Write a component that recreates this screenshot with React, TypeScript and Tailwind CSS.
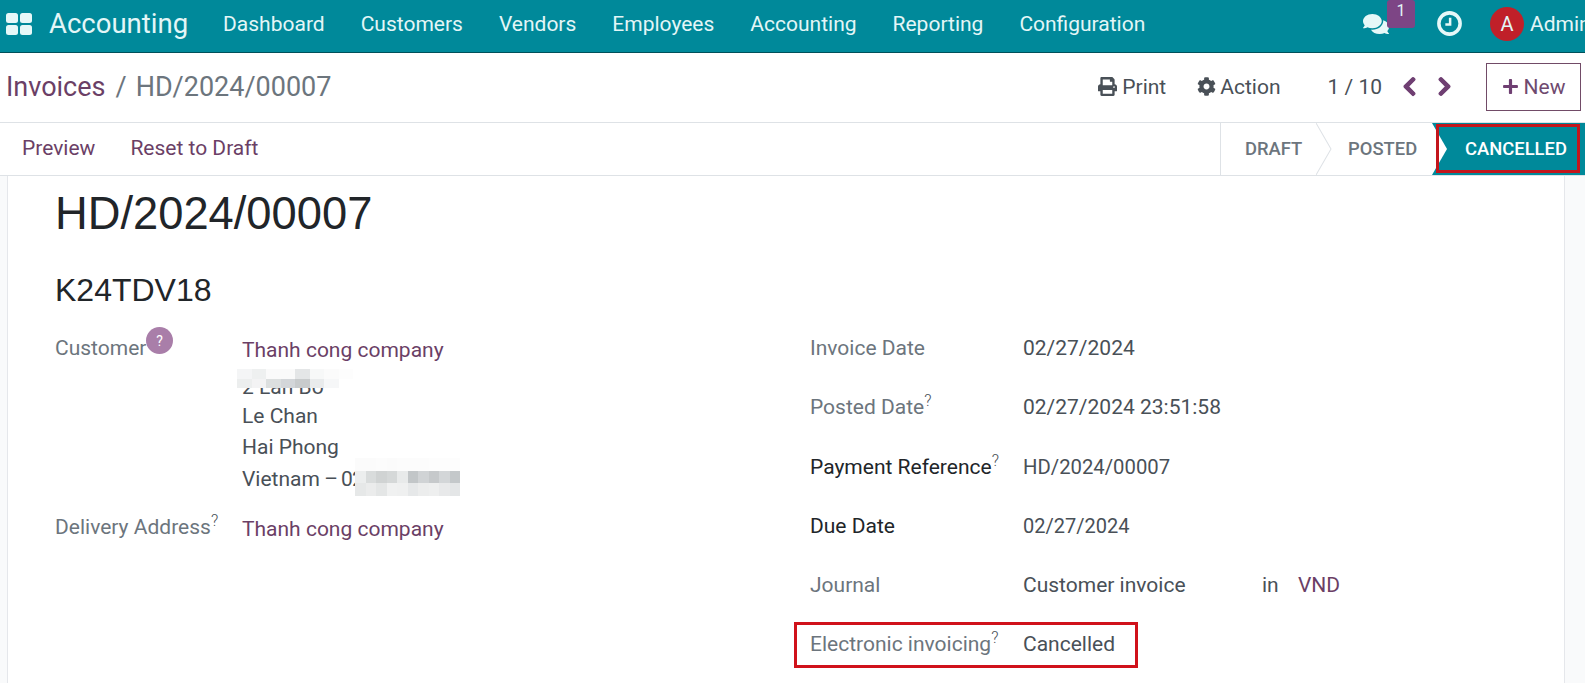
import React from "react";
import { FaComments, FaPrint, FaCog, FaChevronLeft, FaChevronRight, FaPlus } from "react-icons/fa";

const Sup = () => <sup className="-top-[8px] text-[16px] font-light text-[#495057]">?</sup>;

const mosaic1 = [
  ["#f4f5f6", "#eef0f0", "#fafafa", "#fafafa", "#e4e6e7", "#f7f8f8", "#fbfbfb", "#fdfdfd"],
  ["#eceeee", "#f3f3f4", "#dcdfdf", "#d3d6d9", "#c8cbcc", "#e9ebec", "#f6f7f8", "#ffffff"],
];
const mosaic2 = [
  ["#fbfbfb", "#fbfbfb", "#fcfcfc", "#fbfbfb", "#fcfcfc", "#fcfcfc", "#fcfcfc", "#fdfdfd", "#fdfdfd", "#fdfdfd"],
  ["#eceeee", "#d9dcdc", "#d0d3d3", "#d5d8d8", "#e8eaea", "#c2c6c8", "#d0d3d5", "#c6c9cb", "#d3d6d8", "#c4c8ca"],
  ["#e6e8e8", "#ebecec", "#e4e6e6", "#f0f1f1", "#eff0f0", "#e6e8e9", "#eceded", "#eeefef", "#e8e9ea", "#e4e6e7"],
];

const Mosaic = ({ rows, className }: { rows: string[][]; className: string }) => (
  <div className={`absolute flex flex-col ${className}`}>
    {rows.map((r, i) => (
      <div key={i} className="flex flex-1">
        {r.map((c, j) => (
          <div key={j} className="flex-1" style={{ backgroundColor: c }} />
        ))}
      </div>
    ))}
  </div>
);

const Row = ({
  label,
  dark,
  sup,
  className = "",
  children,
}: {
  label: string;
  dark?: boolean;
  sup?: boolean;
  className?: string;
  children: React.ReactNode;
}) => (
  <div className={`flex h-[59px] items-center ${className}`}>
    <div className={`w-[213px] ${dark ? "text-[#212529]" : "text-[#6c757d]"}`}>
      {label}
      {sup && <Sup />}
    </div>
    <div className="flex items-center text-[#495057]">{children}</div>
  </div>
);

export default function App() {
  return (
    <div className="h-[683px] w-[1585px] overflow-hidden bg-[#f9fafb] font-['Roboto',sans-serif] text-[21px] leading-[30px]">
      <header className="flex h-[53px] items-center border-b border-[#01505a] bg-[#00899a] pb-[5px] text-[#e3f6f7]">
        <svg viewBox="0 0 26 22" className="ml-[6px] h-[22px] w-[26px]" fill="#e6f8f8">
          <rect x="0" y="0" width="12" height="10" rx="2.5" />
          <rect x="14" y="0" width="12" height="10" rx="2.5" />
          <rect x="0" y="12" width="12" height="10" rx="2.5" />
          <rect x="14" y="12" width="12" height="10" rx="2.5" />
        </svg>
        <span className="ml-[17px] text-[27.5px]">Accounting</span>
        <nav className="ml-[35px] flex gap-[36px]">
          {["Dashboard", "Customers", "Vendors", "Employees", "Accounting", "Reporting", "Configuration"].map((t) => (
            <span key={t}>{t}</span>
          ))}
        </nav>
        <div className="ml-auto flex items-center">
          <div className="relative">
            <FaComments className="h-[26px] w-[26px] text-[#e6f8f8]" />
            <span className="absolute -top-[11px] left-[24px] flex h-[28px] w-[28px] items-center justify-center rounded-[3px] bg-[#7d4585] pb-[6px] text-[16px]">1</span>
          </div>
          <svg viewBox="0 0 24 24" className="ml-[48px] h-[25px] w-[25px]" fill="none" stroke="#e6f8f8">
            <circle cx="12" cy="12" r="10.2" strokeWidth="3.4" />
            <path d="M12.6 6.5 V13 H8" strokeWidth="2.4" />
          </svg>
          <span className="ml-[28px] flex h-[34px] w-[34px] items-center justify-center rounded-full bg-[#c02029] text-[20px]">A</span>
          <span className="ml-[6px] w-[55px] overflow-hidden whitespace-nowrap">Admin</span>
        </div>
      </header>

      <div className="flex h-[70px] items-center border-b border-[#dee2e6] bg-white pb-[2px] pl-[6px] pr-[4px]">
        <span className="text-[27px] text-[#6b3f66]">Invoices</span>
        <span className="ml-[10px] text-[27px] text-[#6c757d]">/</span>
        <span className="ml-[9px] text-[27px] text-[#6c757d]">HD/2024/00007</span>
        <div className="ml-auto flex items-center text-[#495057]">
          <FaPrint className="h-[19px] w-[19px]" />
          <span className="ml-[5px]">Print</span>
          <FaCog className="ml-[31px] h-[19px] w-[19px]" />
          <span className="ml-[4px]">Action</span>
          <span className="ml-[47px]">1 / 10</span>
          <FaChevronLeft className="ml-[19px] h-[21px] w-[17px] text-[#6f3f72]" stroke="currentColor" strokeWidth={30} />
          <FaChevronRight className="ml-[18px] h-[21px] w-[17px] text-[#6f3f72]" stroke="currentColor" strokeWidth={30} />
          <span className="ml-[33px] flex h-[48px] w-[95px] items-center justify-center gap-[5px] border border-[#714b67] text-[#6f4a6f]">
            <FaPlus className="h-[17px] w-[17px] text-[#6f3f72]" />
            New
          </span>
        </div>
      </div>

      <div className="relative flex h-[53px] items-stretch border-b border-[#dee2e6] bg-white">
        <div className="ml-[22px] flex items-center gap-[35px] pb-[2px] text-[#6b3f66]">
          <span>Preview</span>
          <span>Reset to Draft</span>
        </div>
        <div className="ml-auto flex items-stretch text-[18.4px] font-medium text-[#6c757d]">
          <div className="flex w-[96px] items-center border-l border-[#dee2e6] pl-[24px]">DRAFT</div>
          <svg viewBox="0 0 16 50" className="h-full w-[16px]" preserveAspectRatio="none" fill="none" stroke="#dee2e6">
            <path d="M0 0 L15 25 L0 50" />
          </svg>
          <div className="flex w-[100px] items-center pl-[16px]">POSTED</div>
          <div className="relative flex w-[153px] items-center bg-[#00899a] pl-[33px] text-white">
            <svg viewBox="0 0 16 50" className="absolute left-0 top-0 h-full w-[16px]" preserveAspectRatio="none">
              <path d="M0 0 L15 25 L0 50 Z" fill="#ffffff" />
            </svg>
            CANCELLED
          </div>
        </div>
        <div className="absolute left-[1436px] top-[1px] h-[49px] w-[144px] border-[3px] border-[#c3161c]" />
      </div>

      <main className="relative ml-[7px] mr-[20px] h-[508px] border-x border-[#e5e7eb] bg-white pl-[47px]">
        <h1 className="pt-[8px] font-['Liberation_Sans',sans-serif] text-[45.3px] leading-[60px] text-[#212529]">HD/2024/00007</h1>
        <h2 className="mt-[26px] font-['Liberation_Sans',sans-serif] text-[32px] leading-[40px] text-[#212529]">K24TDV18</h2>
        <div className="mt-[23px] flex">
          <div className="w-[755px]">
            <div className="flex">
              <div className="w-[187px] text-[#6c757d]">
                <span>Customer</span>
              </div>
              <div className="mt-[1px] leading-[32px] text-[#495057]">
                <div className="h-[34px] text-[#6b3f66]">Thanh cong company</div>
                <div className="h-[32px] pt-[3px]">2 Lan Bo</div>
                <div className="h-[31px]">Le Chan</div>
                <div>Hai Phong</div>
                <div>
                  Vietnam<span className="tracking-[-1px]"> – 02</span>
                </div>
              </div>
            </div>
            <div className="mt-[17px] flex">
              <div className="w-[187px] text-[#6c757d]">
                Delivery Address
                <Sup />
              </div>
              <div className="pt-[2px] text-[#6b3f66]">Thanh cong company</div>
            </div>
          </div>
          <div className="-mt-[15px] flex flex-col">
            <Row label="Invoice Date">02/27/2024</Row>
            <Row label="Posted Date" sup>02/27/2024 23:51:58</Row>
            <Row label="Payment Reference" sup dark className="mt-[1px]">
              <span className="text-[20.3px]">HD/2024/00007</span>
            </Row>
            <Row label="Due Date" dark>
              <span className="text-[20px]">02/27/2024</span>
            </Row>
            <Row label="Journal">
              <span className="w-[239px]">Customer invoice</span>
              <span className="w-[36px]">in</span>
              <span className="text-[#6b3f66]">VND</span>
            </Row>
            <Row label="Electronic invoicing" sup>Cancelled</Row>
          </div>
        </div>
        <span className="absolute left-[138px] top-[151px] flex h-[27px] w-[27px] items-center justify-center rounded-full bg-[#a97ea9] text-[14px] text-white">?</span>
        <Mosaic rows={mosaic1} className="left-[229px] top-[193px] h-[19px] w-[116px]" />
        <Mosaic rows={mosaic2} className="left-[347px] top-[282px] h-[38px] w-[105px]" />
        <div className="absolute left-[786px] top-[446px] h-[46px] w-[344px] border-[3px] border-[#d0121b]" />
      </main>
    </div>
  );
}
